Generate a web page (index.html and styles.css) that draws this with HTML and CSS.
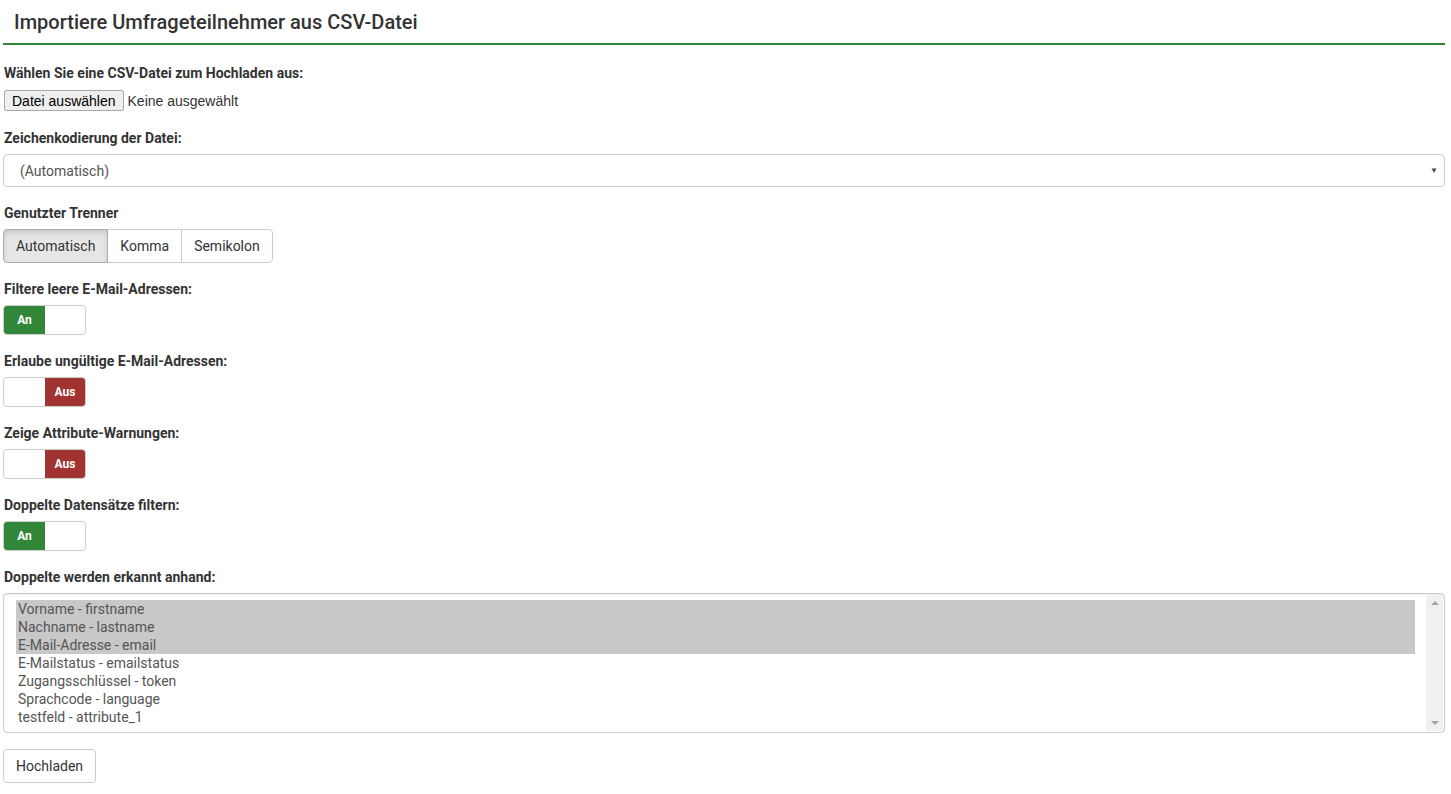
FILE: index.html
```html
<!DOCTYPE html>
<html>
<head>
	<meta charset="utf-8">
	<title>Importiere Umfrageteilnehmer aus CSV-Datei</title>
	<link rel="stylesheet" href="styles.css">
</head>
<body>
	<div class="page">
		<h3 class="pageTitle">Importiere Umfrageteilnehmer aus CSV-Datei</h3>

		<div class="formGroup">
			<label class="ctrlLabel">Wählen Sie eine CSV-Datei zum Hochladen aus:</label>
			<div class="fileRow">
				<span class="fileBtn">Datei auswählen</span>
				<span class="fileName">Keine ausgewählt</span>
			</div>
		</div>

		<div class="formGroup">
			<label class="ctrlLabel">Zeichenkodierung der Datei:</label>
			<div class="selectBox">
				<span>(Automatisch)</span>
				<span class="caret">&#9660;</span>
			</div>
		</div>

		<div class="formGroup">
			<label class="ctrlLabel">Genutzter Trenner</label>
			<div class="btnGroup">
				<span class="btn active">Automatisch</span>
				<span class="btn">Komma</span>
				<span class="btn">Semikolon</span>
			</div>
		</div>

		<div class="formGroup">
			<label class="ctrlLabel">Filtere leere E-Mail-Adressen:</label>
			<div class="toggle on"><span class="half">An</span><span class="half"></span></div>
		</div>

		<div class="formGroup">
			<label class="ctrlLabel">Erlaube ungültige E-Mail-Adressen:</label>
			<div class="toggle off"><span class="half"></span><span class="half">Aus</span></div>
		</div>

		<div class="formGroup">
			<label class="ctrlLabel">Zeige Attribute-Warnungen:</label>
			<div class="toggle off"><span class="half"></span><span class="half">Aus</span></div>
		</div>

		<div class="formGroup">
			<label class="ctrlLabel">Doppelte Datensätze filtern:</label>
			<div class="toggle on"><span class="half">An</span><span class="half"></span></div>
		</div>

		<div class="formGroup">
			<label class="ctrlLabel">Doppelte werden erkannt anhand:</label>
			<div class="multiSelect">
				<ul class="options">
					<li class="sel">Vorname - firstname</li>
					<li class="sel">Nachname - lastname</li>
					<li class="sel">E-Mail-Adresse - email</li>
					<li>E-Mailstatus - emailstatus</li>
					<li>Zugangsschlüssel - token</li>
					<li>Sprachcode - language</li>
					<li>testfeld - attribute_1</li>
				</ul>
				<div class="scrollbar">
					<span class="arrowUp"></span>
					<span class="arrowDown"></span>
				</div>
			</div>
		</div>

		<span class="btn submit">Hochladen</span>
	</div>
</body>
</html>
```

FILE: styles.css
```css
html, body {
	margin: 0;
	background: #fff;
	font-family: Roboto, "Noto Sans", sans-serif;
	font-size: 14px;
	color: #333;
}

.page {
	margin: 0 6px 0 3px;
}

.pageTitle {
	margin: 0 0 18px 0;
	padding: 11px 11px 10px 11px;
	font-size: 20px;
	font-weight: 500;
	line-height: 22px;
	border-bottom: 2px solid #328637;
}

.formGroup {
	margin-bottom: 16px;
}

.ctrlLabel {
	display: block;
	margin: 0 0 6px 1px;
	font-weight: bold;
	line-height: 20px;
}

/* file input */
.fileRow {
	display: flex;
	align-items: center;
	height: 23px;
	font-family: "Liberation Sans", Arial, sans-serif;
	font-size: 14px;
}
.fileBtn {
	margin-left: 1px;
	padding: 2px 7px 1px 7px;
	line-height: 16px;
	background: #efefef;
	border: 1px solid #a9a9a9;
	border-radius: 2px;
	color: #000;
}
.fileName {
	margin-left: 4px;
	color: #333;
}

/* select */
.selectBox {
	display: flex;
	justify-content: space-between;
	align-items: center;
	height: 31px;
	padding: 0 6px 0 16px;
	border: 1px solid #ccc;
	border-radius: 4px;
	color: #555;
}
.caret {
	font-size: 8px;
	color: #444;
}

/* buttons */
.btnGroup {
	display: flex;
}
.btn {
	display: inline-block;
	padding: 6px 12px;
	line-height: 20px;
	background: #fff;
	border: 1px solid #ccc;
	color: #333;
}
.btnGroup .btn + .btn {
	margin-left: -1px;
}
.btnGroup .btn:first-child {
	border-radius: 4px 0 0 4px;
}
.btnGroup .btn:last-child {
	border-radius: 0 4px 4px 0;
}
.btn.active {
	background: #e6e6e6;
	border-color: #adadad;
	box-shadow: inset 0 3px 5px rgba(0, 0, 0, .125);
	position: relative;
	z-index: 1;
}
.submit {
	border-radius: 4px;
}

/* switches */
.toggle {
	display: flex;
	width: 81px;
	height: 28px;
	border: 1px solid #ccc;
	border-radius: 4px;
	overflow: hidden;
}
.toggle .half {
	display: flex;
	align-items: center;
	justify-content: center;
	font-size: 12px;
	font-weight: bold;
	color: #fff;
}
.toggle .half:first-child {
	width: 41px;
}
.toggle .half:last-child {
	flex: 1;
}
.toggle.on .half:first-child {
	background: #328637;
}
.toggle.off .half:last-child {
	background: #a0332f;
}

/* multi select */
.multiSelect {
	display: flex;
	height: 138px;
	border: 1px solid #ccc;
	border-radius: 4px;
	box-shadow: inset 0 1px 1px rgba(0, 0, 0, .075);
	color: #555;
}
.options {
	flex: 1;
	list-style: none;
	margin: 0;
	padding: 6px 11px 0 12px;
}
.options li {
	line-height: 18px;
	padding-left: 2px;
}
.options li.sel {
	background: #c8c8c8;
}
.scrollbar {
	position: relative;
	width: 17px;
	margin: 1px 1px 1px 0;
	background: #f1f1f1;
}
.arrowUp, .arrowDown {
	position: absolute;
	left: 5px;
	width: 0;
	height: 0;
	border-left: 4px solid transparent;
	border-right: 4px solid transparent;
}
.arrowUp {
	top: 6px;
	border-bottom: 4px solid #a3a3a3;
}
.arrowDown {
	bottom: 6px;
	border-top: 4px solid #a3a3a3;
}
```
